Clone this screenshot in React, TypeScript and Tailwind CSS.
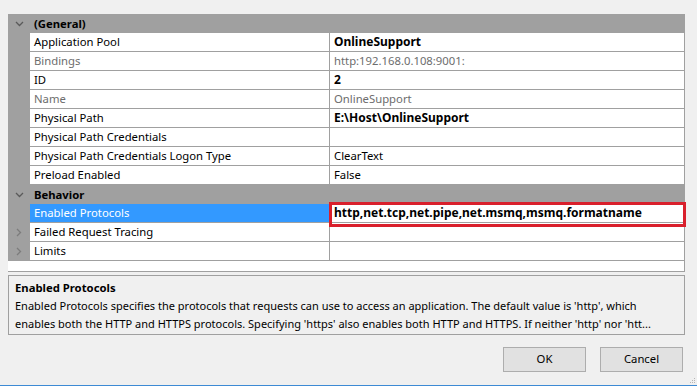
import React from "react";

type Row =
  | { kind: "cat"; label: string }
  | { kind: "prop"; label: string; value: string; gray?: boolean; bold?: boolean; selected?: boolean; expander?: boolean };

const rows: Row[] = [
  { kind: "cat", label: "(General)" },
  { kind: "prop", label: "Application Pool", value: "OnlineSupport", bold: true },
  { kind: "prop", label: "Bindings", value: "http:192.168.0.108:9001:", gray: true },
  { kind: "prop", label: "ID", value: "2", bold: true },
  { kind: "prop", label: "Name", value: "OnlineSupport", gray: true },
  { kind: "prop", label: "Physical Path", value: "E:\\Host\\OnlineSupport", bold: true },
  { kind: "prop", label: "Physical Path Credentials", value: "" },
  { kind: "prop", label: "Physical Path Credentials Logon Type", value: "ClearText" },
  { kind: "prop", label: "Preload Enabled", value: "False" },
  { kind: "cat", label: "Behavior" },
  { kind: "prop", label: "Enabled Protocols", value: "http,net.tcp,net.pipe,net.msmq,msmq.formatname", bold: true, selected: true },
  { kind: "prop", label: "Failed Request Tracing", value: "", expander: true },
  { kind: "prop", label: "Limits", value: "", expander: true },
];

const Down = () => (
  <svg width="9" height="6" viewBox="0 0 9 6" className="block">
    <path d="M1 1 L4.5 4.5 L8 1" fill="none" stroke="#5a5a5a" strokeWidth="1.3" />
  </svg>
);
const Right = () => (
  <svg width="6" height="9" viewBox="0 0 6 9" className="block">
    <path d="M1 1 L4.5 4.5 L1 8" fill="none" stroke="#7c7c7c" strokeWidth="1.3" />
  </svg>
);

export default function App() {
  return (
    <div
      className="w-[697px] h-[386px] bg-[#f0f0f0] relative overflow-hidden text-[11.3px] text-black"
      style={{ fontFamily: '"Segoe UI", "Noto Sans", "Open Sans", sans-serif' }}
    >
      <div className="pt-[14px] pl-[8px] w-[685px]">
        <div className="relative border-b border-r border-[#a0a0a0] bg-white h-[258px]">
          {rows.map((r, i) =>
            r.kind === "cat" ? (
              <div key={i} className="flex h-[19px] bg-[#a0a0a0] items-center">
                <div className="w-[22px] flex justify-center items-center">
                  <Down />
                </div>
                <div className="pl-[4px] font-bold leading-[19px]">{r.label}</div>
              </div>
            ) : (
              <div key={i} className="flex h-[19px]">
                <div className="w-[22px] bg-[#a0a0a0] flex justify-center items-center">
                  {r.expander ? <Right /> : null}
                </div>
                <div
                  className={
                    "w-[300px] border-b border-r border-[#a0a0a0] pl-[4px] leading-[18px] whitespace-nowrap " +
                    (r.selected ? "bg-[#3399ff] text-white" : r.gray ? "text-[#6d6d6d]" : "")
                  }
                >
                  {r.label}
                </div>
                <div
                  className={
                    "flex-1 border-b border-[#a0a0a0] pl-[4px] leading-[18px] whitespace-nowrap " +
                    (r.bold ? "font-bold text-[12px] " : "") +
                    (r.gray ? "text-[#6d6d6d]" : "")
                  }
                >
                  {r.value}
                </div>
              </div>
            )
          )}
          <div className="absolute left-[321px] top-[188px] w-[357px] h-[25px] border-[3px] border-[#d9202c]" />
        </div>
      </div>

      <div className="ml-[8px] mt-[3px] w-[677px] h-[60px] border border-[#a0a0a0] px-[6px] pt-[3px] leading-[18px] overflow-hidden">
        <div className="font-bold text-[11.3px]">Enabled Protocols</div>
        <div className="whitespace-nowrap text-[11px]">
          Enabled Protocols specifies the protocols that requests can use to access an application. The default value is 'http', which
        </div>
        <div className="whitespace-nowrap text-[11px]">
          enables both the HTTP and HTTPS protocols. Specifying 'https' also enables both HTTP and HTTPS. If neither 'http' nor 'htt...
        </div>
      </div>

      <div className="flex justify-end gap-[14px] pr-[14px] mt-[12px]">
        <div className="w-[83px] h-[25px] bg-[#e1e1e1] border border-[#adadad] flex items-center justify-center">OK</div>
        <div className="w-[83px] h-[25px] bg-[#e1e1e1] border border-[#adadad] flex items-center justify-center">Cancel</div>
      </div>

      <div className="absolute right-[2px] bottom-[3px] grid grid-cols-3 gap-[1px]">
        <span />
        <span />
        <span className="w-[1px] h-[1px] bg-[#b5b5b5]" />
        <span />
        <span className="w-[1px] h-[1px] bg-[#b5b5b5]" />
        <span className="w-[1px] h-[1px] bg-[#b5b5b5]" />
        <span className="w-[1px] h-[1px] bg-[#b5b5b5]" />
        <span className="w-[1px] h-[1px] bg-[#b5b5b5]" />
        <span className="w-[1px] h-[1px] bg-[#b5b5b5]" />
      </div>
      <div className="absolute left-0 right-0 bottom-0 h-[1px] bg-[#3d8ad4]" />
    </div>
  );
}
